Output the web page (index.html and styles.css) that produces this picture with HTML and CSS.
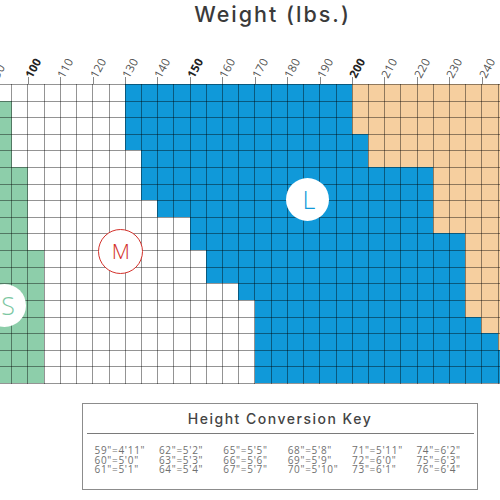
FILE: index.html
```html
<!DOCTYPE html>
<html>
<head>
<meta charset="utf-8">
<link rel="stylesheet" href="styles.css">
</head>
<body>
<div class="page">
  <h1 class="title">Weight (lbs.)</h1>
  <div class="axis">
    <div class="tk"><span class="tl">90</span></div>
    <div class="tk"><span class="tl bold">100</span></div>
    <div class="tk"><span class="tl">110</span></div>
    <div class="tk"><span class="tl">120</span></div>
    <div class="tk"><span class="tl">130</span></div>
    <div class="tk"><span class="tl">140</span></div>
    <div class="tk"><span class="tl bold">150</span></div>
    <div class="tk"><span class="tl">160</span></div>
    <div class="tk"><span class="tl">170</span></div>
    <div class="tk"><span class="tl">180</span></div>
    <div class="tk"><span class="tl">190</span></div>
    <div class="tk"><span class="tl bold">200</span></div>
    <div class="tk"><span class="tl">210</span></div>
    <div class="tk"><span class="tl">220</span></div>
    <div class="tk"><span class="tl">230</span></div>
    <div class="tk"><span class="tl">240</span></div>
    <div class="tk"><span class="tl bold">250</span></div>
  </div>
  <div class="chart">
    <!-- r0 -->
    <div class="w s8"></div><div class="b s14"></div><div class="o s10"></div>
    <!-- r1 -->
    <div class="g s1"></div><div class="w s7"></div><div class="b s14"></div><div class="o s10"></div>
    <!-- r2 -->
    <div class="g s1"></div><div class="w s7"></div><div class="b s14"></div><div class="o s10"></div>
    <!-- r3 -->
    <div class="g s1"></div><div class="w s7"></div><div class="b s15"></div><div class="o s9"></div>
    <!-- r4 -->
    <div class="g s1"></div><div class="w s8"></div><div class="b s14"></div><div class="o s9"></div>
    <!-- r5 -->
    <div class="g s2"></div><div class="w s7"></div><div class="b s18"></div><div class="o s5"></div>
    <!-- r6 -->
    <div class="g s2"></div><div class="w s7"></div><div class="b s18"></div><div class="o s5"></div>
    <!-- r7 -->
    <div class="g s2"></div><div class="w s8"></div><div class="b s17"></div><div class="o s5"></div>
    <!-- r8 -->
    <div class="g s2"></div><div class="w s10"></div><div class="b s15"></div><div class="o s5"></div>
    <!-- r9 -->
    <div class="g s2"></div><div class="w s10"></div><div class="b s17"></div><div class="o s3"></div>
    <!-- r10 -->
    <div class="g s3"></div><div class="w s10"></div><div class="b s16"></div><div class="o s3"></div>
    <!-- r11 -->
    <div class="g s3"></div><div class="w s10"></div><div class="b s16"></div><div class="o s3"></div>
    <!-- r12 -->
    <div class="g s3"></div><div class="w s12"></div><div class="b s14"></div><div class="o s3"></div>
    <!-- r13 -->
    <div class="g s3"></div><div class="w s13"></div><div class="b s13"></div><div class="o s3"></div>
    <!-- r14 -->
    <div class="g s3"></div><div class="w s13"></div><div class="b s14"></div><div class="o s2"></div>
    <!-- r15 -->
    <div class="g s3"></div><div class="w s13"></div><div class="b s15"></div><div class="o s1"></div>
    <!-- r16 -->
    <div class="g s3"></div><div class="w s13"></div><div class="b s16"></div>
    <!-- r17 -->
    <div class="g s3"></div><div class="w s13"></div><div class="b s16"></div>

    <div class="badge badge-s">S</div>
    <div class="badge badge-m">M</div>
    <div class="badge badge-l">L</div>
  </div>
  <div class="key">
    <div class="key-title">Height Conversion Key</div>
    <div class="key-list">
      <span>59"=4'11"</span><span>60"=5'0"</span><span>61"=5'1"</span>
      <span>62"=5'2"</span><span>63"=5'3"</span><span>64"=5'4"</span>
      <span>65"=5'5"</span><span>66"=5'6"</span><span>67"=5'7"</span>
      <span>68"=5'8"</span><span>69"=5'9"</span><span>70"=5'10"</span>
      <span>71"=5'11"</span><span>72"=6'0"</span><span>73"=6'1"</span>
      <span>74"=6'2"</span><span>75"=6'3"</span><span>76"=6'4"</span>
    </div>
  </div>
</div>
</body>
</html>
```
FILE: styles.css
```css
html, body {
  margin: 0;
  padding: 0;
  background: #ffffff;
  overflow: hidden;
}
body {
  width: 500px;
  height: 500px;
  font-family: "Open Sans", "Liberation Sans", sans-serif;
  color: #333;
}
.page {
  width: 500px;
}
.title {
  margin: 0;
  padding: 1px 0 0 45px;
  height: 26px;
  line-height: 26px;
  font-family: Inter, "Open Sans", sans-serif;
  font-size: 21.5px;
  font-weight: 450;
  letter-spacing: 2px;
  color: #3a3a3a;
  text-align: center;
}
.axis {
  display: flex;
  align-items: flex-end;
  height: 57px;
  margin-left: -4.716px;
  overflow: hidden;
}
.tk {
  flex: none;
  width: 32.432px;
  height: 7px;
  box-sizing: border-box;
  border-left: 1px solid #8a8a8a;
}
.tl {
  display: block;
  width: max-content;
  font-size: 11.5px;
  line-height: 11px;
  letter-spacing: 0.3px;
  color: #555;
  transform-origin: 0 50%;
  transform: translate(-1px, -5.5px) rotate(-62deg);
}
.tl.bold {
  font-weight: 700;
  color: #222;
}
.chart {
  position: relative;
  display: grid;
  grid-template-columns: 11.5px repeat(30, 16.216px) 2px;
  grid-template-rows: repeat(18, 16.61px);
  height: 300px;
  overflow: hidden;
}
.chart::after {
  content: "";
  position: absolute;
  top: 0;
  bottom: 0;
  left: -4.716px;
  right: 0;
  z-index: 1;
  background-image:
    repeating-linear-gradient(90deg, rgba(0,0,0,0.42) 0 1px, transparent 1px 16.216px),
    repeating-linear-gradient(180deg, rgba(0,0,0,0.42) 0 1px, transparent 1px 16.61px);
}
.g { background: #8dceaa; }
.w { background: #ffffff; }
.b { background: #1099d9; }
.o { background: #f6cf9f; }
.s1 { grid-column: span 1; }
.s2 { grid-column: span 2; }
.s3 { grid-column: span 3; }
.s5 { grid-column: span 5; }
.s7 { grid-column: span 7; }
.s8 { grid-column: span 8; }
.s9 { grid-column: span 9; }
.s10 { grid-column: span 10; }
.s12 { grid-column: span 12; }
.s13 { grid-column: span 13; }
.s14 { grid-column: span 14; }
.s15 { grid-column: span 15; }
.s16 { grid-column: span 16; }
.s17 { grid-column: span 17; }
.s18 { grid-column: span 18; }
.badge {
  position: absolute;
  z-index: 2;
  box-sizing: border-box;
  border-radius: 50%;
  background: #ffffff;
  display: flex;
  align-items: center;
  justify-content: center;
  font-size: 25px;
  font-weight: 300;
  line-height: 1;
}
.badge-s {
  left: -17.5px;
  top: 199.5px;
  width: 43px;
  height: 43px;
  color: #7cc7a2;
  padding-left: 8px;
}
.badge-m {
  left: 98.3px;
  top: 145.2px;
  width: 45px;
  height: 45px;
  border: 1.5px solid #d3312b;
  color: #d3312b;
  font-size: 21px;
}
.badge-l {
  left: 286.3px;
  top: 93.7px;
  width: 43px;
  height: 43px;
  color: #1099d9;
  padding-left: 2px;
}
.key {
  box-sizing: border-box;
  width: 396px;
  height: 87px;
  margin: 19px 0 0 82px;
  border: 1.5px solid #8c8c8c;
  padding: 0 3.5px;
}
.key-title {
  padding-top: 1px;
  line-height: 28px;
  font-family: Inter, "Open Sans", sans-serif;
  font-size: 14px;
  font-weight: 450;
  letter-spacing: 1.5px;
  color: #444;
  text-align: center;
  border-bottom: 1.5px solid #7a7a7a;
}
.key-list {
  display: grid;
  grid-template-rows: repeat(3, 9.7px);
  grid-auto-flow: column;
  grid-auto-columns: 64.4px;
  padding: 12px 0 0 8px;
  font-size: 10px;
  line-height: 9.7px;
  letter-spacing: 0.7px;
  color: #707070;
  white-space: nowrap;
}
```
